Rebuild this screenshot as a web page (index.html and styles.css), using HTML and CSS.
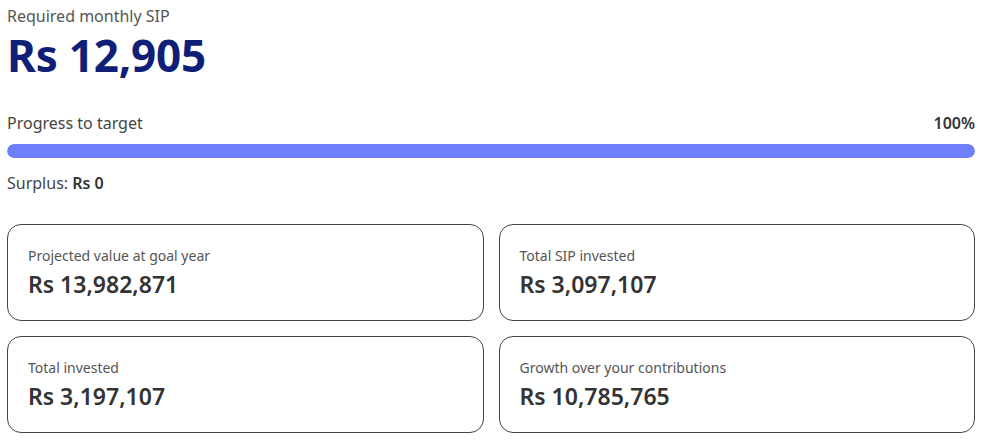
FILE: index.html
```html
<!DOCTYPE html>
<html>
<head>
<meta charset="utf-8">
<link rel="stylesheet" href="styles.css">
</head>
<body>
<div class="page">
  <div class="label-top">Required monthly SIP</div>
  <div class="big">Rs 12,905</div>
  <div class="progress-head">
    <span>Progress to target</span>
    <span class="pct">100%</span>
  </div>
  <div class="bar"><div class="fill" style="width:100%"></div></div>
  <div class="surplus">Surplus: <b>Rs 0</b></div>
  <div class="grid">
    <div class="card"><div class="clabel">Projected value at goal year</div><div class="cval">Rs 13,982,871</div></div>
    <div class="card"><div class="clabel">Total SIP invested</div><div class="cval">Rs 3,097,107</div></div>
    <div class="card"><div class="clabel">Total invested</div><div class="cval">Rs 3,197,107</div></div>
    <div class="card"><div class="clabel">Growth over your contributions</div><div class="cval">Rs 10,785,765</div></div>
  </div>
</div>
</body>
</html>
```
FILE: styles.css
```css
html, body { margin: 0; padding: 0; background: #fff; }
body { font-family: "Noto Sans", "Open Sans", sans-serif; color: #333; }
.page { width: 968px; margin-left: 7px; padding-top: 4px; }
.label-top { font-size: 16px; line-height: 24px; color: #555; }
.big { font-size: 44px; font-weight: 700; color: #0f1f78; line-height: 54px; margin-top: 0; letter-spacing: -0.2px; }
.progress-head { display: flex; justify-content: space-between; align-items: baseline; margin-top: 29px; font-size: 16px; line-height: 24px; color: #444; }
.pct { font-weight: 600; color: #333; font-size: 16px; }
.bar { height: 14px; background: #e6e9ff; border-radius: 7px; margin-top: 9px; overflow: hidden; }
.fill { height: 100%; background: #6e7ffb; border-radius: 7px; }
.surplus { margin-top: 13px; font-size: 16px; line-height: 24px; color: #444; }
.surplus b { color: #333; font-weight: 600; }
.grid { display: grid; grid-template-columns: 1fr 1fr; gap: 15px; margin-top: 29px; }
.card { border: 1px solid #444; border-radius: 14px; padding: 21px 20px 0; box-sizing: border-box; height: 97px; }
.clabel { font-size: 14px; line-height: 20px; color: #555; }
.cval { font-size: 23px; font-weight: 600; line-height: 32px; color: #333; margin-top: 2px; }
```
